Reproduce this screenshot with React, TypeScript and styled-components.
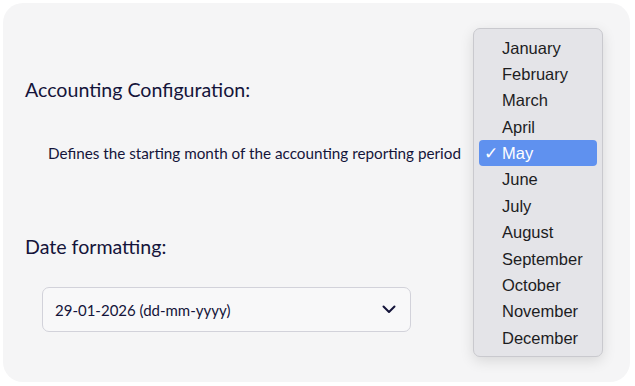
import React from "react";
import styled, { createGlobalStyle } from "styled-components";

const GlobalStyle = createGlobalStyle`
  html, body {
    margin: 0;
    padding: 0;
    background: #ffffff;
  }
  * {
    box-sizing: border-box;
  }
`;

const Card = styled.div`
  position: relative;
  margin: 3px;
  width: 627px;
  height: 379px;
  border-radius: 20px;
  background: #f5f5f6;
  padding: 73px 0 0 22px;
  font-family: Lato, "Noto Sans", sans-serif;
  color: #14143a;
`;

const Section = styled.section<{ $gap: number }>`
  display: flex;
  flex-direction: column;
  gap: ${(p) => p.$gap}px;
`;

const Heading = styled.h2`
  margin: 0;
  font-size: 19.6px;
  font-weight: 400;
  line-height: 28px;
`;

const Description = styled.p`
  margin: 0;
  padding-left: 23px;
  font-size: 15.25px;
  line-height: 22px;
`;

const Spacer = styled.div<{ $h: number }>`
  height: ${(p) => p.$h}px;
`;

const SelectBox = styled.div`
  margin-left: 17px;
  width: 369px;
  height: 45px;
  display: flex;
  align-items: center;
  justify-content: space-between;
  padding: 0 14px 0 12px;
  border: 1px solid #d2d2da;
  border-radius: 7px;
  background: #f8f8f9;
  font-size: 15px;
`;

const Menu = styled.ul`
  position: absolute;
  left: 470px;
  top: 25px;
  width: 130px;
  margin: 0;
  padding: 5.5px 5px 5px;
  list-style: none;
  background: #e4e4e8;
  border: 1px solid #c9c9ce;
  border-radius: 7px;
  box-shadow: 0 4px 14px rgba(0, 0, 0, 0.12);
  font-family: "Liberation Sans", Arial, sans-serif;
  font-size: 16.5px;
  color: #1d1d1f;
`;

const MenuItem = styled.li<{ $selected?: boolean }>`
  position: relative;
  height: 26.4px;
  line-height: 26.4px;
  padding-left: 23px;
  border-radius: 4px;
  background: ${(p) => (p.$selected ? "#5f91ef" : "transparent")};
  color: ${(p) => (p.$selected ? "#ffffff" : "inherit")};
`;

const Check = styled.span`
  position: absolute;
  left: 5px;
  top: 0;
`;

const months = [
  "January",
  "February",
  "March",
  "April",
  "May",
  "June",
  "July",
  "August",
  "September",
  "October",
  "November",
  "December",
];

export default function App() {
  return (
    <>
      <GlobalStyle />
      <Card>
        <Section $gap={38}>
          <Heading>Accounting Configuration:</Heading>
          <Description>
            Defines the starting month of the accounting reporting period
          </Description>
        </Section>
        <Spacer $h={69} />
        <Section $gap={26}>
          <Heading>Date formatting:</Heading>
          <SelectBox>
            <span>29-01-2026 (dd-mm-yyyy)</span>
            <svg width="14" height="9" viewBox="0 0 14 9" fill="none">
              <path
                d="M1.5 1.5 L7 7 L12.5 1.5"
                stroke="#14143a"
                strokeWidth="2"
                strokeLinecap="round"
                strokeLinejoin="round"
              />
            </svg>
          </SelectBox>
        </Section>
        <Menu>
          {months.map((m) => (
            <MenuItem key={m} $selected={m === "May"}>
              {m === "May" && <Check>✓</Check>}
              {m}
            </MenuItem>
          ))}
        </Menu>
      </Card>
    </>
  );
}
